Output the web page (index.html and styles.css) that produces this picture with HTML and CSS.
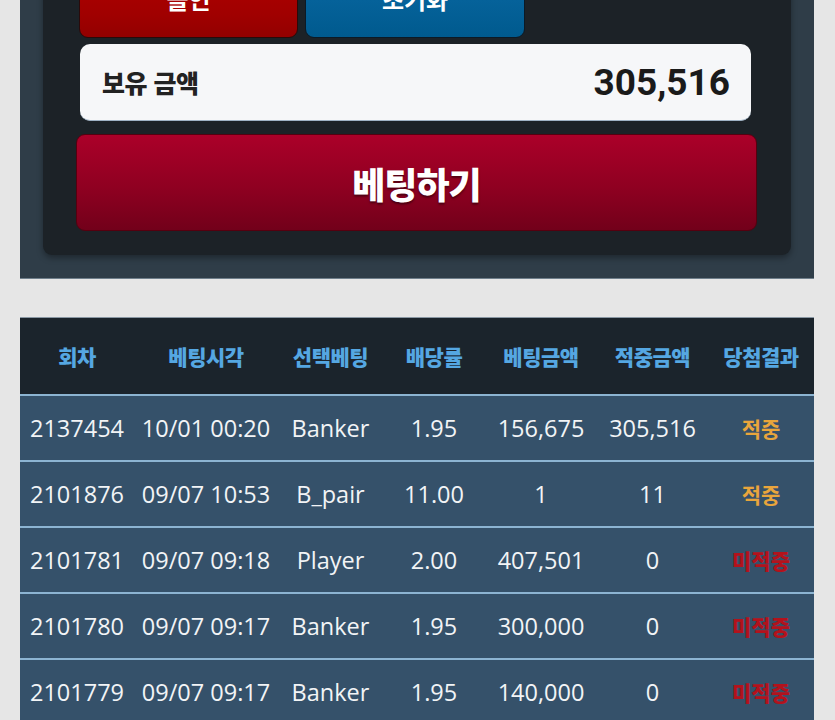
FILE: index.html
```html
<!DOCTYPE html>
<html lang="ko">
<head>
<meta charset="utf-8">
<title>베팅</title>
<link rel="stylesheet" href="styles.css">
</head>
<body>
<section class="panel">
  <div class="card">
    <div class="quick-row">
      <button class="btn btn-allin">올인</button>
      <button class="btn btn-reset">초기화</button>
    </div>
    <div class="balance">
      <span class="balance-label">보유 금액</span>
      <span class="balance-value">305,516</span>
    </div>
    <button class="btn-bet">베팅하기</button>
  </div>
</section>

<table class="history">
  <colgroup>
    <col class="c1"><col class="c2"><col class="c3"><col class="c4"><col class="c5"><col class="c6"><col class="c7">
  </colgroup>
  <thead>
    <tr>
      <th>회차</th><th>베팅시각</th><th>선택베팅</th><th>배당률</th><th>베팅금액</th><th>적중금액</th><th>당첨결과</th>
    </tr>
  </thead>
  <tbody>
    <tr><td>2137454</td><td>10/01 00:20</td><td>Banker</td><td>1.95</td><td>156,675</td><td>305,516</td><td class="win">적중</td></tr>
    <tr><td>2101876</td><td>09/07 10:53</td><td>B_pair</td><td>11.00</td><td>1</td><td>11</td><td class="win">적중</td></tr>
    <tr><td>2101781</td><td>09/07 09:18</td><td>Player</td><td>2.00</td><td>407,501</td><td>0</td><td class="lose">미적중</td></tr>
    <tr><td>2101780</td><td>09/07 09:17</td><td>Banker</td><td>1.95</td><td>300,000</td><td>0</td><td class="lose">미적중</td></tr>
    <tr><td>2101779</td><td>09/07 09:17</td><td>Banker</td><td>1.95</td><td>140,000</td><td>0</td><td class="lose">미적중</td></tr>
  </tbody>
</table>
</body>
</html>
```

FILE: styles.css
```css
html, body {
  margin: 0;
  padding: 0;
}
body {
  background: #e6e6e6;
  font-family: "Noto Sans CJK KR", "Noto Sans", sans-serif;
  overflow: hidden;
  height: 720px;
}

.panel {
  margin: -60px 21px 0 20px;
  padding: 10px 23px 23px 23px;
  background: #2f3d48;
  border-bottom: 1px solid #6f7f8b;
}

.card {
  background: #1c2227;
  border-radius: 9px;
  padding: 12px 34px 24px 33px;
  box-shadow: 0 3px 6px rgba(0, 0, 0, 0.35);
}

.quick-row {
  display: flex;
  gap: 7px;
  margin-left: 3px;
}
.btn {
  height: 76px;
  border-radius: 9px;
  border: 1px solid #111518;
  color: #ffffff;
  font-family: "Noto Sans CJK KR", sans-serif;
  font-weight: 700;
  font-size: 24px;
  padding: 0 0 4px 0;
}
.btn-allin {
  width: 219px;
  background: linear-gradient(#b30000, #a00000 70%, #930000);
  border-color: #2a0a0a;
}
.btn-reset {
  width: 220px;
  background: linear-gradient(#0a6aa6, #005a8e);
  border-color: #0b1a26;
}

.balance {
  margin: 6px 6px 0 4px;
  height: 77px;
  box-sizing: border-box;
  background: #f6f7f9;
  border-radius: 10px;
  border-bottom: 1px solid #9fb2c4;
  display: flex;
  align-items: center;
  justify-content: space-between;
  padding: 0 21px 0 22px;
}
.balance-label {
  font-family: "Noto Sans CJK KR", sans-serif;
  font-weight: 800;
  font-size: 25px;
  color: #222222;
  letter-spacing: -0.5px;
}
.balance-value {
  font-family: Roboto, "Liberation Sans", sans-serif;
  font-weight: 700;
  font-size: 37px;
  color: #1a1a1a;
}

.btn-bet {
  display: block;
  width: 100%;
  margin-top: 13px;
  height: 97px;
  border-radius: 9px;
  border: 1px solid #55000f;
  background: linear-gradient(#ab0029, #8f0021 55%, #72001a);
  color: #ffffff;
  font-family: "Noto Sans CJK KR", sans-serif;
  font-weight: 800;
  font-size: 36px;
  letter-spacing: -1px;
  text-shadow: 0 2px 2px rgba(40, 0, 10, 0.6);
  padding: 0;
}

.history {
  margin: 38px 21px 0 20px;
  width: 794px;
  table-layout: fixed;
  border-collapse: separate;
  border-spacing: 0;
  font-family: "Open Sans", "Noto Sans CJK KR", sans-serif;
}
.c1 { width: 114px; }
.c2 { width: 144px; }
.c3 { width: 105px; }
.c4 { width: 102px; }
.c5 { width: 112px; }
.c6 { width: 111px; }
.c7 { width: 106px; }

.history th {
  height: 76px;
  padding: 0;
  background: #1b242c;
  border-top: 1px solid #8a98a4;
  color: #55a7e2;
  font-family: "Noto Sans CJK KR", sans-serif;
  font-weight: 800;
  font-size: 21px;
  letter-spacing: -0.5px;
  text-align: center;
  vertical-align: middle;
}
.history td {
  height: 64px;
  padding: 0;
  background: #35516a;
  border-top: 2px solid #8cb4d2;
  color: #f2f4f6;
  font-size: 23.5px;
  text-align: center;
  vertical-align: middle;
  white-space: nowrap;
}
.history td.win {
  color: #e9a53c;
  font-family: "Noto Sans CJK KR", sans-serif;
  font-size: 21px;
  font-weight: 700;
}
.history td.lose {
  color: #b3121c;
  font-family: "Noto Sans CJK KR", sans-serif;
  font-size: 21px;
  font-weight: 800;
}
```
